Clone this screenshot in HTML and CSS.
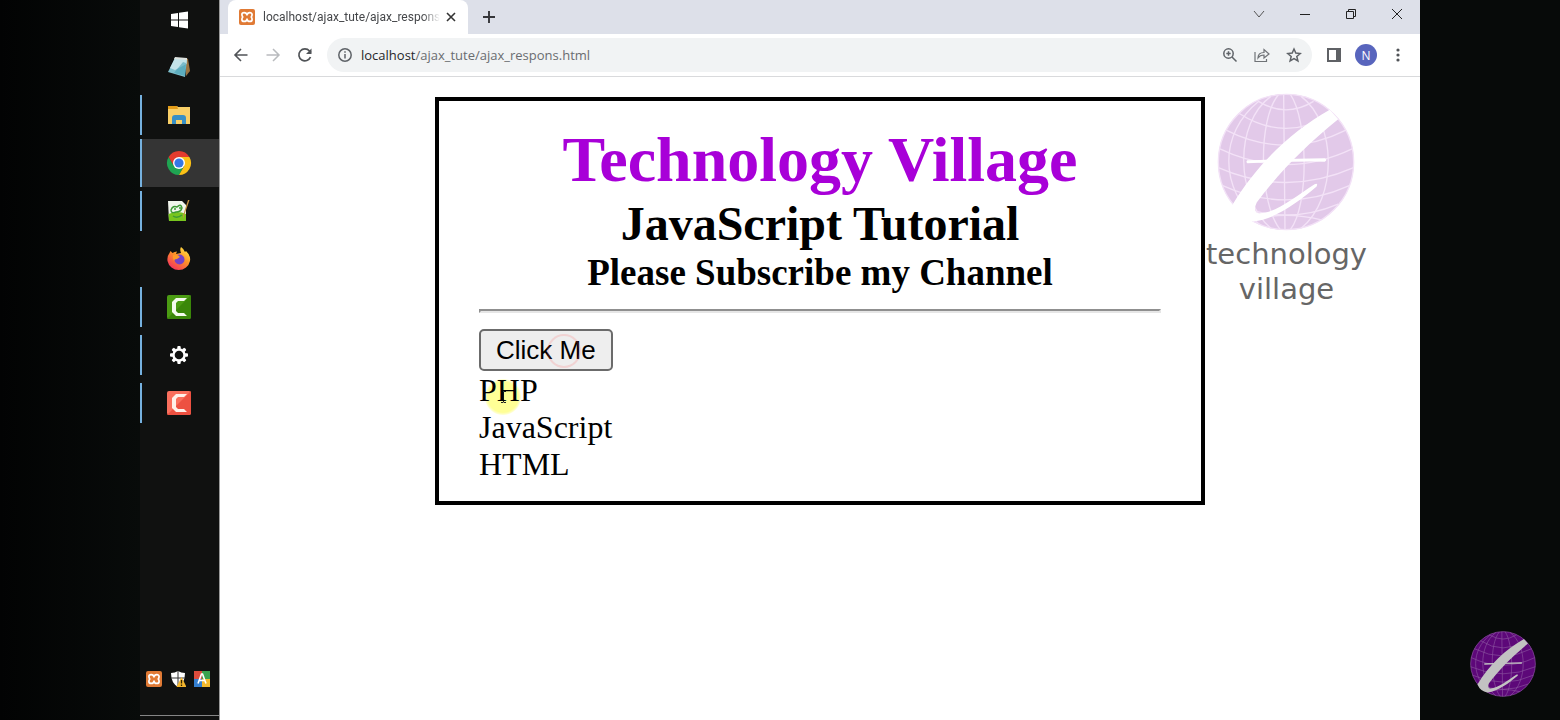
FILE: index.html
```html
<!DOCTYPE html>
<html lang="en">
<head>
<meta charset="utf-8">
<title>localhost/ajax_tute/ajax_respons.html</title>
<link rel="stylesheet" href="styles.css">
</head>
<body>
<svg class="sprites" aria-hidden="true">
  <symbol id="xampp" viewBox="0 0 16 16">
    <rect width="16" height="16" rx="2" fill="#e07a35"/>
    <path d="M8 5.800C7.300 2.800 2.900 3 2.900 5.600q0 1.500.9 2.400-.9.900-.9 2.400C2.900 13 7.300 13.200 8 10.200c.7 3 5.100 2.800 5.100.2q0-1.500-.9-2.400.9-.9.900-2.400C13.100 3 8.700 2.800 8 5.800z" fill="none" stroke="#fff" stroke-width="1.700" stroke-linejoin="round"/>
  </symbol>
  <symbol id="globe" viewBox="80 40 410 410">
    <circle class="sea" cx="285" cy="245" r="202"/>
    <g class="grid" fill="none">
      <circle cx="285" cy="245" r="201"/>
      <path d="M278 44C278 150 282 350 282 446M262 46C200 120 205 370 268 446M298 44C350 120 355 370 298 446M240 50C130 130 135 350 240 442M330 50C435 130 440 350 330 442M205 64C85 160 85 320 205 430"/>
      <path d="M203 65Q285 115 367 65M145 100Q285 190 425 100M107 150Q285 240 463 150M87 205Q285 300 483 205M84 262Q285 350 486 262M97 315Q285 400 473 315M130 370Q285 435 440 370M180 417Q285 390 390 417"/>
    </g>
    <g class="swoosh">
      <path d="M415 90L440 118C340 200 270 270 198 365Q186 391 202 397C250 400 310 350 370 311Q381 306 376 318C325 360 260 413 188 422Q145 415 126 372C200 250 300 155 415 90z"/>
      <path d="M170 240Q285 236 400 234Q410 239 400 244Q285 243 170 249Q165 244 170 240z"/>
    </g>
  </symbol>
</svg>

<aside class="gutter"></aside>
<nav class="taskbar" aria-label="Taskbar">
  <button class="task start" aria-label="Start"><svg width="18" height="18" viewBox="0 0 18 18" fill="#fff"><path d="M1 3l7-1v6.600H1zM9 1.800l9-1.300v8.100H9zM1 9.600h7v6.500l-7-1zM9 9.600h9v7.900l-9-1.300z"/></svg></button>
  <button class="task" aria-label="Notepad"><svg width="24" height="24" viewBox="0 0 24 24"><path d="M19 3l2 1 2 12-4 5z" fill="#9a7442"/><path d="M8 3l12 1-2 18-17-5z" fill="#7fc0cd"/><path d="M8 3l12 1-.5 5L8 15l-5-2z" fill="#c3e3e8"/><path d="M16 7l-9 11 11 3 1-13z" fill="#3f9db3" opacity=".55"/><path d="M8 2l12 1v2L7 4z" fill="#dde2de"/></svg></button>
  <button class="task open" aria-label="File Explorer"><svg width="24" height="22" viewBox="0 0 24 22"><path d="M1 2h9l1 1h12v17H1z" fill="#f8cf67"/><path d="M1 2h9l1 3H1z" fill="#e39c19"/><path d="M5 20v-6q0-3 3-3h8q3 0 3 3v6h-4v-4H9v4z" fill="#378fc5"/></svg></button>
  <button class="task open active" aria-label="Chrome"><svg width="26" height="26" viewBox="0 0 26 26"><path d="M2.600 7A12 12 0 0 0 13 25l5-9H8z" fill="#1fa452"/><path d="M13 7h10.400A12 12 0 0 1 13 25l5.200-9z" fill="#fbc116"/><path d="M2.600 7A12 12 0 0 1 23.400 7H13l-5 9z" fill="#e33b2e"/><circle cx="13" cy="13" r="6" fill="#fff"/><circle cx="13" cy="13" r="4.600" fill="#3477e5"/></svg></button>
  <button class="task open" aria-label="Notepad++"><svg width="24" height="24" viewBox="0 0 24 24"><path d="M1 2h14l4 4v16H2z" fill="#f1f5ec"/><path d="M1.500 15q9-4 17.500 0v7H2z" fill="#78c51e"/><path d="M4 11q2-5 6-3 4-4 5 1-1 4-6 4-5 2-5-2zm3-1h2m3-1h2M6 17q4 3 9-1" fill="none" stroke="#3e9a35" stroke-width="1.400"/><path d="M22.500 1L17 17l-1 3v-3.500L21 1z" fill="#c89443"/></svg></button>
  <button class="task" aria-label="Firefox"><svg width="26" height="26" viewBox="0 0 26 26"><defs><linearGradient id="fire" x1=".9" y1="0" x2=".2" y2="1"><stop offset="0" stop-color="#fff04a"/><stop offset=".45" stop-color="#ff9426"/><stop offset="1" stop-color="#f52b62"/></linearGradient></defs><path d="M3 8l1.500-3 2 2q2-1.500 4.500-1.500L10 8l5-1q-1.500-4 0-6 3 2 4 5l1-1q5 5 4 10A11.500 11.500 0 0 1 1.500 15Q1 10 3 8z" fill="url(#fire)"/><circle cx="13.500" cy="13.500" r="5" fill="#7542c8"/><path d="M7 9q5-1 7 2l-3 2q-3 0-3 2-2-3-1-6z" fill="#ff9a29"/></svg></button>
  <button class="task open" aria-label="Camtasia"><svg width="24" height="24" viewBox="0 0 24 24"><rect width="24" height="24" rx="2" fill="#4b9c13"/><path d="M0 24L24 0v22q0 2-2 2z" fill="#3a8709"/><path d="M20 3H9L5 7v10l4 4h11l-3-3h-6l-2-2V8l2-2h6z" fill="#f4fbed"/></svg></button>
  <button class="task open" aria-label="Settings"><svg width="20" height="20" viewBox="-10 -10 20 20"><g fill="#fff"><circle r="6.700"/><g id="teeth"><rect x="-1.700" y="-9" width="3.400" height="18" rx="1"/><rect x="-9" y="-1.700" width="18" height="3.400" rx="1"/></g><use href="#teeth" transform="rotate(45)"/></g><circle r="4.300" fill="#101110"/></svg></button>
  <button class="task open" aria-label="Camtasia Recorder"><svg width="24" height="24" viewBox="0 0 24 24"><rect width="24" height="24" rx="2" fill="#fa6f5d"/><path d="M0 24L24 0v22q0 2-2 2z" fill="#ed5141"/><path d="M20 3H9L5 7v10l4 4h11l-3-3h-6l-2-2V8l2-2h6z" fill="#fff0e9"/></svg></button>
  <div class="tray">
    <svg width="16" height="16"><use href="#xampp"/></svg>
    <svg width="16" height="16" viewBox="0 0 16 16"><path d="M8 0q3 2 7 2 0 10-7 14Q1 12 1 2q4 0 7-2z" fill="#fff"/><path d="M8 0v15M1 7h14" stroke="#333" stroke-width="1"/><path d="M11.500 6L16.500 16h-10z" fill="#f4b62d"/><path d="M11.500 9v3.500m0 1v1.500" stroke="#332500" stroke-width="1.300"/></svg>
    <svg width="16" height="16" viewBox="0 0 16 16"><path d="M0 0h8v8H0z" fill="#dc4c3d"/><path d="M8 0h8v8H8z" fill="#3aa34e"/><path d="M0 8h8v8H0z" fill="#347fd0"/><path d="M8 8h8v8H8z" fill="#f2b92d"/><path d="M4 12.500L7.500 3h1l3.500 9.500M5.300 9.500h5.400" fill="none" stroke="#fff" stroke-width="1.600"/></svg>
  </div>
</nav>

<div class="browser">
  <header>
    <div class="tabstrip">
      <div class="tab">
        <svg width="16" height="16"><use href="#xampp"/></svg>
        <span class="tab-title">localhost/ajax_tute/ajax_respons.</span>
        <button class="icon" aria-label="Close tab"><svg width="12" height="12" viewBox="0 0 12 12" stroke="#333" stroke-width="1.600"><path d="M2 2l8 8M10 2l-8 8"/></svg></button>
      </div>
      <button class="icon new-tab" aria-label="New tab"><svg width="14" height="14" viewBox="0 0 14 14" stroke="#35363a" stroke-width="1.900"><path d="M7 1v12M1 7h12"/></svg></button>
      <div class="window-buttons">
        <button class="icon" aria-label="Search tabs"><svg width="12" height="12" viewBox="0 0 12 12" fill="none" stroke="#555"><path d="M1 3l5 6 5-6"/></svg></button>
        <button class="icon" aria-label="Minimize"><svg width="12" height="12" viewBox="0 0 12 12" stroke="#222"><path d="M1 6.500h10"/></svg></button>
        <button class="icon" aria-label="Restore"><svg width="12" height="12" viewBox="0 0 12 12" fill="none" stroke="#222"><path d="M1.500 3.500h7v7h-7zM3.500 3.500v-2h7v7h-2"/></svg></button>
        <button class="icon" aria-label="Close"><svg width="12" height="12" viewBox="0 0 12 12" stroke="#222"><path d="M1 1l10 10M11 1L1 11"/></svg></button>
      </div>
    </div>
    <div class="toolbar">
      <button class="icon" aria-label="Back"><svg width="16" height="16" viewBox="0 0 16 16" fill="none" stroke="#505357" stroke-width="1.600"><path d="M14.500 8H2M8 2L2 8l6 6"/></svg></button>
      <button class="icon" aria-label="Forward"><svg width="16" height="16" viewBox="0 0 16 16" fill="none" stroke="#b9bbbe" stroke-width="1.500"><path d="M1.500 8H14M8 2l6 6-6 6"/></svg></button>
      <button class="icon" aria-label="Reload"><svg width="16" height="16" viewBox="0 0 16 16" fill="none" stroke="#505357" stroke-width="1.700"><path d="M13.500 10A6 6 0 1 1 12.500 4L14 5.500"/><path d="M14.500 1.500V7H9z" fill="#505357" stroke="none"/></svg></button>
      <div class="omnibox">
        <svg width="16" height="16" viewBox="0 0 16 16" fill="none" stroke="#5f6368" stroke-width="1.500"><circle cx="8" cy="8" r="6.200"/><path d="M8 7v4.500M8 4.200v1.600"/></svg>
        <a class="url" href="#"><span class="host">localhost</span>/ajax_tute/ajax_respons.html</a>
        <button class="icon" aria-label="Zoom"><svg width="16" height="16" viewBox="0 0 16 16" fill="none" stroke="#5f6368" stroke-width="1.500"><circle cx="6.500" cy="6.500" r="4.700"/><path d="M10 10l4.500 4.500M6.500 4.300v4.400M4.300 6.500h4.400"/></svg></button>
        <button class="icon" aria-label="Share"><svg width="16" height="16" viewBox="0 0 16 16" fill="none" stroke="#6f7276" stroke-width="1.200"><path d="M1 5v9.500h11.500V12M4 11q0-5.500 6-5.500V2.500L15 7l-5 4V8Q6 8 4 11z"/></svg></button>
        <button class="icon" aria-label="Bookmark"><svg width="16" height="16" viewBox="0 0 16 16" fill="none" stroke="#5f6368" stroke-width="1.500"><path d="M8 2l1.800 4.100 4.500.4-3.500 3 1.100 4.400L8 11.600l-3.900 2.300 1.100-4.400-3.500-3 4.500-.4z"/></svg></button>
      </div>
      <button class="icon" aria-label="Side panel"><svg width="16" height="16" viewBox="0 0 16 16"><path d="M1 1h14v14H1z" fill="#5f6165"/><path d="M3 3h7v10H3z" fill="#fff"/></svg></button>
      <button class="avatar" aria-label="Profile N">N</button>
      <button class="icon" aria-label="Menu"><svg width="16" height="16" viewBox="0 0 16 16" fill="#505357"><circle cx="8" cy="3" r="1.600"/><circle cx="8" cy="8" r="1.600"/><circle cx="8" cy="13" r="1.600"/></svg></button>
    </div>
  </header>
  <main class="page">
    <section class="box">
      <h1>Technology Village</h1>
      <h2>JavaScript Tutorial</h2>
      <h3>Please Subscribe my Channel</h3>
      <hr>
      <button class="click-me">Click Me<span class="ripple"></span></button>
      <div class="result"><span class="halo"><svg width="7" height="12" viewBox="0 0 7 12" fill="none" stroke="#222"><path d="M1 .5h2l.5.500.5-.5h2M1 11.500h2l.5-.5.500.5h2M3.500 1v10"/></svg></span>PHP<br>JavaScript<br>HTML</div>
    </section>
    <div class="watermark">
      <svg width="138" height="138"><use href="#globe"/></svg>
      <span>technology<br>village</span>
    </div>
  </main>
</div>
<aside class="gutter brand"><svg width="66" height="66"><use href="#globe"/></svg></aside>
</body>
</html>
```

FILE: styles.css
```css
* { box-sizing: border-box; }

body {
  --sea: #e2c9e9;
  --grid: #f3e2f7;
  --swoosh: #fff;
  margin: 0;
  min-height: 100vh;
  display: flex;
  background: #060908;
  font-family: "Open Sans", "Noto Sans", sans-serif;
}

button {
  border: 0;
  padding: 0;
  background: none;
  font: inherit;
}

svg { display: block; flex: none; }
.sprites { position: absolute; width: 0; height: 0; }

.gutter {
  flex: 0 0 140px;
  background: linear-gradient(90deg, #020303, #080b0a);
}

/* Taskbar */
.taskbar {
  flex: 0 0 80px;
  display: flex;
  flex-direction: column;
  background: #101110;
  border-right: 1px solid #9a9a9a;
}

.task {
  height: 48px;
  padding-right: 1px;
  display: flex;
  align-items: center;
  justify-content: center;
  position: relative;
}

.task.start { height: 43px; padding-bottom: 4px; }

.task.open::before {
  content: "";
  position: absolute;
  left: 0;
  top: 4px;
  bottom: 4px;
  width: 2px;
  background: #76b1df;
}

.task.active { background: #343434; }
.task.active::before { top: 0; bottom: 0; }

.tray {
  margin-top: auto;
  margin-bottom: 4px;
  padding: 0 9px 28px 6px;
  display: flex;
  justify-content: space-between;
  border-bottom: 1px solid #868686;
}

/* Browser chrome */
.browser {
  flex: 1;
  min-width: 0;
  display: flex;
  flex-direction: column;
  background: #fff;
}

.tabstrip {
  height: 34px;
  display: flex;
  background: #dde0e9;
  padding-left: 8px;
}

.tab {
  width: 240px;
  padding: 0 11px;
  display: flex;
  align-items: center;
  gap: 8px;
  background: #fff;
  border-radius: 8px 8px 0 0;
}

.tab-title {
  flex: 1;
  min-width: 0;
  margin-right: -3px;
  white-space: nowrap;
  font-family: Roboto, sans-serif;
  font-size: 12px;
  color: #45474a;
  mask-image: linear-gradient(90deg, #000 90%, transparent);
}

.icon {
  display: flex;
  align-items: center;
  justify-content: center;
}

.new-tab { width: 42px; }

.window-buttons {
  margin-left: auto;
  display: flex;
  padding-bottom: 6px;
}

.window-buttons .icon { width: 46px; }

.toolbar {
  height: 43px;
  padding: 0 14px 0 13px;
  display: flex;
  align-items: center;
  gap: 16px;
  border-bottom: 1px solid #d9dadc;
}

.omnibox {
  flex: 1;
  height: 34px;
  margin: 0 -2px;
  padding: 0 10px;
  display: flex;
  align-items: center;
  gap: 16px;
  background: #f1f3f4;
  border-radius: 17px;
}

.url {
  flex: 1;
  margin-left: -8px;
  font-size: 13px;
  color: #696c70;
  text-decoration: none;
}

.host { color: #26272a; }

.avatar {
  width: 22px;
  height: 22px;
  margin: 0 -3px;
  border-radius: 50%;
  background: #5865bd;
  color: #fff;
  font-size: 12px;
}

/* Page */
.page {
  flex: 1;
  position: relative;
  padding: 20px 215px;
  font-family: "Liberation Serif", serif;
  font-size: 32px;
  line-height: 37px;
  color: #000;
}

.box {
  border: 4px solid #000;
  padding: 22px 40px 18px;
}

h1, h2, h3 { margin: 0; text-align: center; }
h1 { font-size: 64px; line-height: 74px; color: #a800d8; }
h2 { font-size: 48px; line-height: 54px; }
h3 { font-size: 37px; line-height: 44px; }

hr {
  margin: 14px 0 16px;
  border: 2px solid;
  border-color: #8f8f8f #e6e6e6 #e6e6e6 #8f8f8f;
}

.click-me {
  display: block;
  position: relative;
  height: 42px;
  margin-bottom: 1px;
  padding: 0 15px;
  border: 2px solid #6b6b6b;
  border-radius: 5px;
  background: #eee;
  font-family: "Liberation Sans", sans-serif;
  font-size: 26px;
  line-height: 36px;
}

.ripple {
  position: absolute;
  left: 66px;
  top: 3px;
  width: 34px;
  height: 34px;
  border: 2px solid rgba(255, 90, 90, .18);
  border-radius: 50%;
}

.result { position: relative; isolation: isolate; }

.halo {
  position: absolute;
  z-index: -1;
  left: 6px;
  top: 7px;
  width: 36px;
  height: 36px;
  display: flex;
  align-items: center;
  justify-content: center;
  border-radius: 50%;
  background: radial-gradient(closest-side, #ffff96 85%, #ffffe0);
}

/* Logos */
.watermark {
  position: absolute;
  top: 16px;
  right: 53px;
  display: flex;
  flex-direction: column;
  align-items: center;
  gap: 6px;
  text-align: center;
  font-family: "DejaVu Sans", sans-serif;
  font-size: 29px;
  line-height: 35px;
  color: #666;
}

.sea { fill: var(--sea); }
.grid { stroke: var(--grid); stroke-width: 4px; }
.swoosh { fill: var(--swoosh); }

.brand {
  --sea: #5d0879;
  --grid: #8b55a0;
  --swoosh: #c2c2c2;
  display: flex;
  align-items: flex-end;
  justify-content: center;
  padding: 0 0 23px 26px;
  background: #070a09;
}
```
